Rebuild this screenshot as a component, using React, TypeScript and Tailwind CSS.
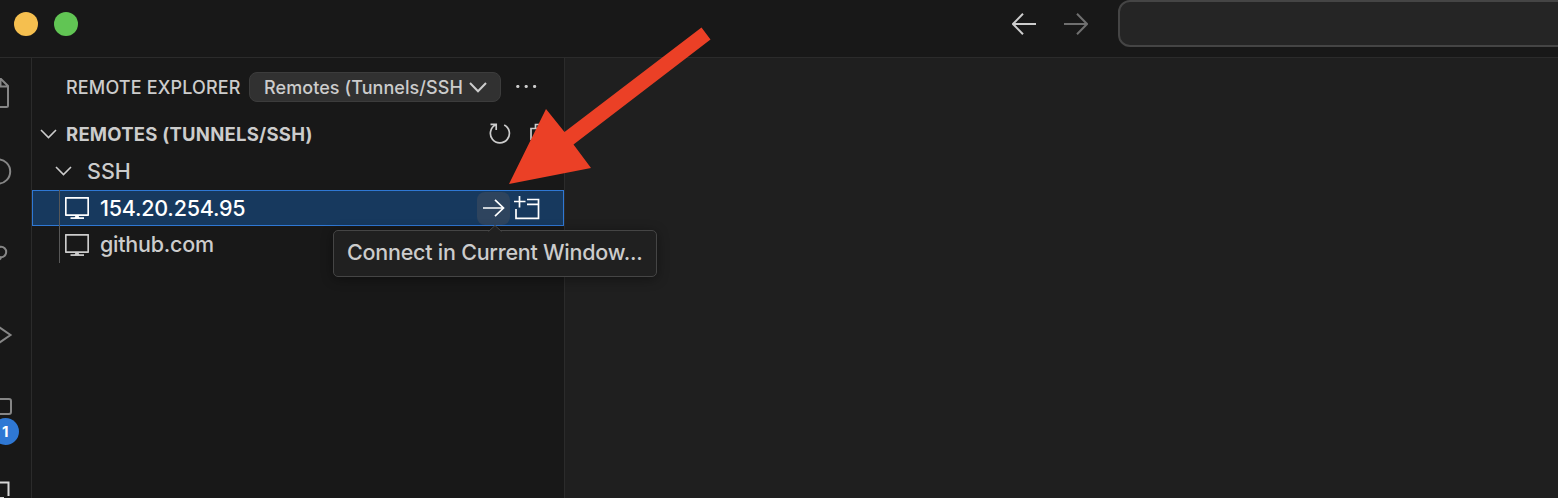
import type { ReactNode } from 'react';

type IconProps = { className?: string; box: string; children: ReactNode };

function Icon({ className = '', box, children }: IconProps) {
  return (
    <svg
      viewBox={box}
      fill="none"
      stroke="currentColor"
      className={`block shrink-0 ${className}`}
      aria-hidden="true"
    >
      {children}
    </svg>
  );
}

function Chevron({ className = '' }: { className?: string }) {
  return (
    <Icon box="0 0 18 10" className={`h-[10px] w-[18px] ${className}`}>
      <path d="M1 1l7.500 7.500L16 1" strokeWidth="1.6" />
    </Icon>
  );
}

function Monitor() {
  return (
    <Icon box="0 0 24 22" className="h-[22px] w-6">
      <path d="M.8.8h22.400v17.400H.8z" strokeWidth="1.700" strokeLinejoin="round" />
      <path d="M5.500 21.100h13.500" strokeWidth="1.700" />
      <path d="M10.500 18.500h3l1 2.500h-5z" fill="currentColor" stroke="none" />
    </Icon>
  );
}

function TitleBar() {
  return (
    <header className="flex h-[58px] shrink-0 items-start border-b border-[#2b2b2b]">
      <div className="flex gap-4 pt-3 pl-[14px]">
        <span className="size-6 rounded-full bg-[#f5bf4f]" />
        <span className="size-6 rounded-full bg-[#61c554]" />
      </div>
      <div className="ml-[934px] flex gap-[28px] pt-[13px]">
        <Icon box="0 0 24 22" className="h-[22px] w-6 text-[#cccccc]">
          <path d="M24 11H1M11 .8L1 11l10 10.2" strokeWidth="2" />
        </Icon>
        <Icon box="0 0 24 22" className="h-[22px] w-6 text-[#6f6f6f]">
          <path d="M0 11h23M13 .8L23 11 13 21.2" strokeWidth="2" />
        </Icon>
      </div>
      <div className="ml-[30px] h-[47px] w-[460px] shrink-0 rounded-xl border-2 border-[#454545] bg-[#252525]" />
    </header>
  );
}

function ActivityBar() {
  return (
    <nav className="flex w-8 shrink-0 flex-col overflow-hidden border-r border-[#2b2b2b] text-[#868686]">
      <Icon box="0 58 31 72" className="h-[72px] w-[31px]">
        <path d="M-4 79H1l7 7v19.500q0 1.500-1.500 1.500H-4M.5 79v7.500H8" strokeWidth="2" />
      </Icon>
      <Icon box="0 130 31 80" className="h-20 w-[31px]">
        <circle cx="-2" cy="171.500" r="12.200" strokeWidth="2" />
      </Icon>
      <Icon box="0 210 31 80" className="h-20 w-[31px]">
        <circle cx="1" cy="252" r="5.200" strokeWidth="2" />
        <path d="M1 257q-.5 3-4 3" strokeWidth="2" />
      </Icon>
      <Icon box="0 290 31 80" className="h-20 w-[31px]">
        <path d="M-12 319.500L10.500 335-12 350.500" strokeWidth="2" />
      </Icon>
      <Icon box="0 370 31 100" className="h-[100px] w-[31px]">
        <path d="M-4 399H9q2 0 2 2v11q0 2-2 2H-4" strokeWidth="2" />
        <circle cx="5.500" cy="431.500" r="13.500" fill="#2f78d4" stroke="none" />
        <text
          x="5.300"
          y="437"
          textAnchor="middle"
          fill="#fff"
          stroke="none"
          className="font-['Inter'] text-[15px] font-bold"
        >
          1
        </text>
      </Icon>
      <Icon box="0 470 31 28" className="h-7 w-[31px] text-[#d7d7d7]">
        <path d="M-2 482.500H8.500V496M-2 498H4" strokeWidth="2" />
      </Icon>
    </nav>
  );
}

function Tooltip() {
  return (
    <div className="absolute top-[172px] left-[301px] flex h-[47px] w-[324px] items-center rounded-[5px] border border-[#454545] bg-[#202020] pl-[13px] shadow-[0_2px_12px_rgba(0,0,0,0.4)]">
      <span className="pb-[2px] text-[21.500px] font-[450] tracking-[-0.240px] whitespace-nowrap">
        Connect in Current Window...
      </span>
      <svg
        className="absolute -top-[6px] left-[154px] h-[7px] w-[14px]"
        viewBox="0 0 14 7"
        aria-hidden="true"
      >
        <path d="M0 7L7 .5 14 7z" fill="#202020" />
        <path d="M.5 6.500L7 .5l6.500 6" fill="none" stroke="#454545" />
      </svg>
    </div>
  );
}

function Sidebar() {
  return (
    <aside className="relative flex w-[533px] shrink-0 flex-col border-r border-[#2b2b2b]">
      <div className="flex h-[58px] shrink-0 items-center pl-[34px]">
        <h2 className="w-[183px] shrink-0 text-[18px] font-[450] tracking-[0.160px] whitespace-nowrap">
          REMOTE EXPLORER
        </h2>
        <button className="flex h-[30px] w-[252px] items-center rounded-lg border border-[#3c3c3c] bg-[#313131] pl-[14px]">
          <span className="w-[205px] text-left text-[18px] font-[450] tracking-[0.070px] whitespace-nowrap">
            Remotes (Tunnels/SSH
          </span>
          <Icon box="0 0 18 11" className="h-[11px] w-[18px]">
            <path d="M1 1l8 8.200L17 1" strokeWidth="2" />
          </Icon>
        </button>
        <Icon box="0 0 22 4" className="ml-[15px] h-1 w-[22px]">
          <g fill="currentColor" stroke="none">
            <circle cx="1.800" cy="1.500" r="1.600" />
            <circle cx="10.200" cy="1.500" r="1.600" />
            <circle cx="18.600" cy="1.500" r="1.600" />
          </g>
        </Icon>
      </div>
      <div className="flex h-9 shrink-0 items-center pl-2">
        <Chevron />
        <h3 className="ml-[8px] w-[423px] shrink-0 text-[18.500px] leading-7 font-bold tracking-[0.240px] whitespace-nowrap">
          REMOTES (TUNNELS/SSH)
        </h3>
        <Icon box="488.500 123 22 22" className="h-[22px] w-[22px]">
          <path
            d="M490 124.300h5.700v5.700M495.300 124.800A9.500 9.500 0 1 0 503.700 124.900"
            strokeWidth="1.700"
          />
        </Icon>
        <Icon box="529 122 24 24" className="ml-[18px] h-6 w-6">
          <path d="M531 140v-11.500h4.500v-4h14v14h-4M535 128.500h10v14h-10" strokeWidth="1.700" />
        </Icon>
      </div>
      <div className="flex h-[38px] shrink-0 items-center pl-[23px]">
        <Chevron />
        <span className="ml-[14px] text-[21.500px] font-[450]">SSH</span>
      </div>
      <div className="flex h-9 shrink-0 items-center border border-[#2f78d4] bg-[#17395e] text-white">
        <span className="ml-[26px] h-9 w-px bg-[#585858]" />
        <span className="ml-[5px]">
          <Monitor />
        </span>
        <span className="ml-[11px] w-[377px] text-[21.500px] font-[450] tracking-[-0.220px] whitespace-nowrap">
          154.20.254.95
        </span>
        <span className="flex size-[33px] items-center justify-center rounded-lg bg-[#2e445e]">
          <Icon box="0 0 22 18" className="h-[18px] w-[22px]">
            <path d="M0 9h20.500M12 .8L20.500 9 12 17.200" strokeWidth="1.700" />
          </Icon>
        </span>
        <Icon box="514 196.500 27 25" className="ml-[4px] h-[25px] w-[27px]">
          <path
            d="M519.500 196.500v11.500M514 202h11.500M527 200h11.500v18.800h-22.500V209.500M527 204.800h11.500"
            strokeWidth="1.700"
          />
        </Icon>
      </div>
      <div className="flex h-[37px] shrink-0 items-center">
        <span className="ml-[27px] h-[37px] w-px bg-[#585858]" />
        <span className="ml-[5px]">
          <Monitor />
        </span>
        <span className="ml-[11px] text-[21.500px] font-[450] tracking-[-0.250px] whitespace-nowrap">
          github.com
        </span>
      </div>
      <Tooltip />
    </aside>
  );
}

export default function App() {
  return (
    <div className="relative flex h-[498px] w-[1558px] flex-col overflow-hidden bg-[#181818] font-['Inter',sans-serif] text-[#cccccc]">
      <TitleBar />
      <div className="flex min-h-0 flex-1">
        <ActivityBar />
        <Sidebar />
        <main className="flex-1 bg-[#1f1f1f]" />
      </div>
      <svg
        className="absolute top-[20px] left-[500px] h-[170px] w-[220px]"
        viewBox="500 20 220 170"
        aria-hidden="true"
      >
        <path
          d="M509 184L546 109 564.500 132 701.500 27.500 710.500 39.500 573.500 144.500 591 168z"
          fill="#eb4026"
        />
      </svg>
    </div>
  );
}
